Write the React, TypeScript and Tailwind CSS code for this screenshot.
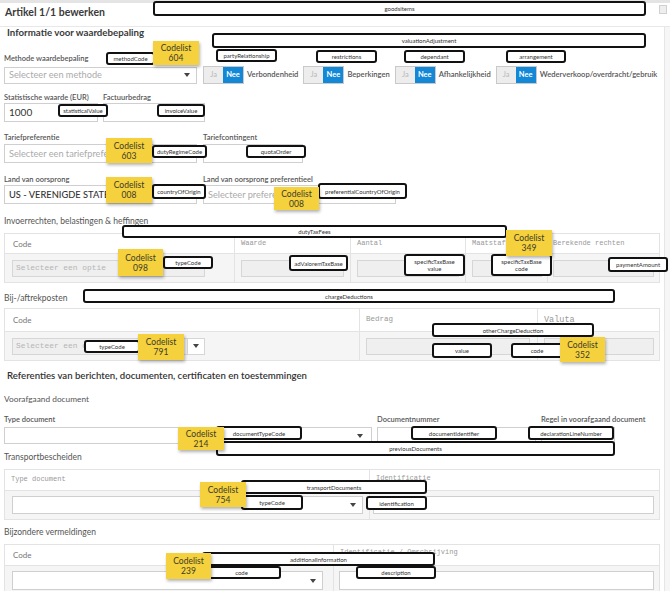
import React from "react";

const boxes: { c: string; t: string }[] = [
  { c: "left-[153px] top-[1px] w-[493px] h-[15px]", t: "goodsitems" },
  { c: "left-[212px] top-[33px] w-[434px] h-[15px]", t: "valuationAdjustment" },
  { c: "left-[106px] top-[52px] w-[49px] h-[13px]", t: "methodCode" },
  { c: "left-[216px] top-[49px] w-[61px] h-[13px]", t: "partyRelationship" },
  { c: "left-[316px] top-[50px] w-[61px] h-[13px]", t: "restrictions" },
  { c: "left-[404px] top-[50px] w-[61px] h-[13px]", t: "dependant" },
  { c: "left-[506px] top-[50px] w-[60px] h-[13px]", t: "arrangement" },
  { c: "left-[58px] top-[104px] w-[50px] h-[13px]", t: "statisticalValue" },
  { c: "left-[157px] top-[104px] w-[48px] h-[13px]", t: "invoiceValue" },
  { c: "left-[152px] top-[145px] w-[55px] h-[13px]", t: "dutyRegimeCode" },
  { c: "left-[246px] top-[145px] w-[60px] h-[13px]", t: "quotaOrder" },
  { c: "left-[152px] top-[184px] w-[54px] h-[15px]", t: "countryOfOrigin" },
  { c: "left-[318px] top-[183px] w-[89px] h-[16px]", t: "preferentialCountryOfOrigin" },
  { c: "left-[122px] top-[225px] w-[385px] h-[13px]", t: "dutyTaxFees" },
  { c: "left-[163px] top-[256px] w-[50px] h-[13px]", t: "typeCode" },
  { c: "left-[289px] top-[255px] w-[59px] h-[16px]", t: "adValoremTaxBase" },
  { c: "left-[404px] top-[254px] w-[61px] h-[22px]", t: "specificTaxBase\nvalue" },
  { c: "left-[491px] top-[254px] w-[61px] h-[22px]", t: "specificTaxBase\ncode" },
  { c: "left-[608px] top-[257px] w-[60px] h-[15px]", t: "paymentAmount" },
  { c: "left-[83px] top-[289px] w-[532px] h-[14px]", t: "chargeDeductions" },
  { c: "left-[84px] top-[340px] w-[56px] h-[13px]", t: "typeCode" },
  { c: "left-[432px] top-[323px] w-[162px] h-[14px]", t: "otherChargeDeduction" },
  { c: "left-[432px] top-[343px] w-[60px] h-[15px]", t: "value" },
  { c: "left-[511px] top-[343px] w-[52px] h-[15px]", t: "code" },
  { c: "left-[216px] top-[426px] w-[86px] h-[14px]", t: "documentTypeCode" },
  { c: "left-[411px] top-[426px] w-[86px] h-[14px]", t: "documentIdentifier" },
  { c: "left-[528px] top-[426px] w-[86px] h-[14px]", t: "declarationLineNumber" },
  { c: "left-[216px] top-[441px] w-[399px] h-[15px]", t: "previousDocuments" },
  { c: "left-[241px] top-[480px] w-[186px] h-[14px]", t: "transportDocuments" },
  { c: "left-[241px] top-[495px] w-[62px] h-[15px]", t: "typeCode" },
  { c: "left-[366px] top-[496px] w-[61px] h-[14px]", t: "identification" },
  { c: "left-[202px] top-[552px] w-[233px] h-[14px]", t: "additionalInformation" },
  { c: "left-[202px] top-[566px] w-[79px] h-[13px]", t: "code" },
  { c: "left-[356px] top-[566px] w-[80px] h-[13px]", t: "description" },
];

const notes: { c: string; n: string }[] = [
  { c: "left-[153px] top-[41px] w-[46px] h-[24px]", n: "604" },
  { c: "left-[106px] top-[138px] w-[46px] h-[25px]", n: "603" },
  { c: "left-[106px] top-[177px] w-[46px] h-[26px]", n: "008" },
  { c: "left-[274px] top-[187px] w-[45px] h-[23px]", n: "008" },
  { c: "left-[118px] top-[249px] w-[45px] h-[27px]", n: "098" },
  { c: "left-[506px] top-[230px] w-[46px] h-[26px]", n: "349" },
  { c: "left-[138px] top-[334px] w-[46px] h-[26px]", n: "791" },
  { c: "left-[560px] top-[337px] w-[45px] h-[25px]", n: "352" },
  { c: "left-[178px] top-[427px] w-[46px] h-[23px]", n: "214" },
  { c: "left-[200px] top-[482px] w-[46px] h-[25px]", n: "754" },
  { c: "left-[166px] top-[553px] w-[45px] h-[26px]", n: "239" },
];

function Arrow() {
  return (
    <svg width="6" height="4" viewBox="0 0 6 4" className="shrink-0">
      <path d="M0 0h6L3 4z" fill="#444" />
    </svg>
  );
}

function Toggle({ label }: { label: string }) {
  return (
    <div className="flex shrink-0 items-center">
      <div className="flex h-[18px] w-[41px] border border-[#c9c9c9]">
        <div className="flex w-[19px] items-center justify-center bg-[#ededed] text-[7.5px] text-[#b8b8b8]">Ja</div>
        <div className="flex flex-1 items-center justify-center bg-[#1288d6] text-[7.5px] font-bold text-white">Nee</div>
      </div>
      <span className="ml-[3px] whitespace-nowrap text-[7.6px] font-semibold text-[#555]">{label}</span>
    </div>
  );
}

const lbl = "h-[10px] text-[7.5px] font-semibold leading-[10px] text-[#555] whitespace-nowrap";
const mono = "font-['Liberation_Mono',monospace]";

export default function App() {
  return (
    <div className="relative h-[591px] w-[670px] overflow-hidden bg-white font-['Lato',sans-serif] text-[#444]">
      {/* right gutter */}
      <div className="absolute right-0 top-[27px] h-[564px] w-[6px] border-l border-[#e6e6e6] bg-[#f6f6f6]" />
      <div className="absolute left-[659px] top-[5px] h-[9px] w-[8px] border border-[#d0d0d0] bg-[#eeeeee]" />

      <div className="h-[3px] w-full bg-[#e4e4e4]" />
      <div className="h-[24px] border-b border-[#e8e8e8] pl-[5px] pt-[2px] text-[10.5px] font-bold leading-[14px] text-[#3a3a3a]">
        Artikel 1/1 bewerken
      </div>

      <div className="px-[4px]">
        <div className="h-[11px] pl-[3px] text-[9.7px] font-bold leading-[11px] text-[#3a3a3a]">
          Informatie voor waardebepaling
        </div>

        <div className={`mt-[16px] ${lbl}`}>Methode waardebepaling</div>
        <div className="mt-[2px] flex items-center">
          <div className="flex h-[17px] w-[193px] shrink-0 items-center justify-between border border-[#cfcfcf] pl-[4px] pr-[6px]">
            <span className="text-[9.2px] text-[#ababab]">Selecteer een methode</span>
            <Arrow />
          </div>
          <div className="ml-[6px] flex items-center gap-[5px]">
            <Toggle label="Verbondenheid" />
            <Toggle label="Beperkingen" />
            <Toggle label="Afhankelijkheid" />
            <Toggle label="Wederverkoop/overdracht/gebruik" />
          </div>
        </div>

        <div className="mt-[9px] flex">
          <div className="w-[94px] shrink-0">
            <div className={lbl}>Statistische waarde (EUR)</div>
            <div className="flex h-[19px] items-center border border-[#cfcfcf] pl-[4px] text-[10px] text-[#333]">1000</div>
          </div>
          <div className="ml-[5px] w-[102px] shrink-0">
            <div className={lbl}>Factuurbedrag</div>
            <div className="h-[19px] border border-[#cfcfcf]" />
          </div>
        </div>

        <div className="mt-[11px] flex">
          <div className="w-[193px] shrink-0">
            <div className={lbl}>Tariefpreferentie</div>
            <div className="mt-[1px] flex h-[19px] items-center overflow-hidden border border-[#cfcfcf] pl-[4px]">
              <span className="whitespace-nowrap text-[9.2px] text-[#ababab]">Selecteer een tariefpreferentie</span>
            </div>
          </div>
          <div className="ml-[6px] w-[100px] shrink-0">
            <div className={lbl}>Tariefcontingent</div>
            <div className="mt-[1px] h-[19px] border border-[#cfcfcf]" />
          </div>
        </div>

        <div className="mt-[12px] flex">
          <div className="w-[193px] shrink-0">
            <div className={lbl}>Land van oorsprong</div>
            <div className="flex h-[19px] items-center overflow-hidden border border-[#cfcfcf] pl-[4px]">
              <span className="whitespace-nowrap text-[9.3px] font-medium text-[#333]">US - VERENIGDE STATEN</span>
            </div>
          </div>
          <div className="ml-[6px] w-[193px] shrink-0">
            <div className={lbl}>Land van oorsprong preferentieel</div>
            <div className="flex h-[19px] items-center overflow-hidden border border-[#cfcfcf] pl-[4px]">
              <span className="whitespace-nowrap text-[9.2px] text-[#ababab]">Selecteer preferentieel land</span>
            </div>
          </div>
        </div>

        <div className="mt-[12px] h-[10px] text-[8.5px] leading-[10px] text-[#555]">Invoerrechten, belastingen &amp; heffingen</div>
        <div className="mt-[7px] w-[656px] border border-[#e3e3e3]">
          <div className="grid h-[19px] grid-cols-[229px_116px_115px_82px_1fr] text-[7px] text-[#999]">
            <div className="flex items-center pl-[8px] text-[8px] text-[#777]">Code</div>
            <div className={`flex items-center border-l border-[#e3e3e3] pl-[6px] ${mono}`}>Waarde</div>
            <div className={`flex items-center border-l border-[#e3e3e3] pl-[6px] ${mono}`}>Aantal</div>
            <div className={`flex items-center border-l border-[#e3e3e3] pl-[6px] ${mono}`}>Maatstaf</div>
            <div className={`flex items-center border-l border-[#e3e3e3] pl-[5px] ${mono}`}>Berekende rechten</div>
          </div>
          <div className="grid h-[29px] grid-cols-[229px_116px_115px_82px_1fr] border-t border-[#e3e3e3] bg-[#f5f5f5]">
            <div className="flex items-center pl-[7px]">
              <div className={`flex h-[17px] w-[193px] items-center border border-[#d6d6d6] bg-[#efefef] pl-[3px] text-[7.9px] text-[#b5b5b5] ${mono}`}>Selecteer een optie</div>
            </div>
            <div className="flex items-center border-l border-[#e3e3e3] pl-[6px]">
              <div className="h-[17px] w-[103px] border border-[#d6d6d6] bg-[#efefef]" />
            </div>
            <div className="flex items-center border-l border-[#e3e3e3] pl-[6px]">
              <div className="h-[17px] w-[102px] border border-[#d6d6d6] bg-[#efefef]" />
            </div>
            <div className="flex items-center border-l border-[#e3e3e3] pl-[6px]">
              <div className="h-[17px] w-[70px] border border-[#d6d6d6] bg-[#efefef]" />
            </div>
            <div className="flex items-center border-l border-[#e3e3e3] pl-[5px]">
              <div className="h-[17px] w-[101px] border border-[#d6d6d6] bg-[#efefef]" />
            </div>
          </div>
        </div>

        <div className="mt-[10px] h-[10px] text-[8.5px] leading-[10px] text-[#555]">Bij-/aftrekposten</div>
        <div className="mt-[5px] w-[656px] border border-[#e3e3e3]">
          <div className="grid h-[22px] grid-cols-[354px_178px_1fr] text-[7.5px] text-[#999]">
            <div className="flex items-center pl-[8px] text-[8px] text-[#777]">Code</div>
            <div className={`flex items-center border-l border-[#e3e3e3] pl-[6px] ${mono}`}>Bedrag</div>
            <div className={`flex items-center border-l border-[#e3e3e3] pl-[6px] text-[8.5px] ${mono}`}>Valuta</div>
          </div>
          <div className="grid h-[29px] grid-cols-[354px_178px_1fr] border-t border-[#e3e3e3] bg-[#f5f5f5]">
            <div className="flex items-center pl-[7px]">
              <div className="flex h-[17px] w-[193px] items-center border border-[#d6d6d6] bg-[#efefef]">
                <span className={`flex-1 pl-[3px] text-[7.9px] text-[#b5b5b5] ${mono}`}>Selecteer een optie</span>
                <div className="flex h-full w-[17px] items-center justify-center border-l border-[#d6d6d6] bg-white">
                  <Arrow />
                </div>
              </div>
            </div>
            <div className="flex items-center border-l border-[#e3e3e3] pl-[6px]">
              <div className="h-[17px] w-[164px] border border-[#d6d6d6] bg-[#efefef]" />
            </div>
            <div className="flex items-center border-l border-[#e3e3e3] pl-[6px]">
              <div className="h-[17px] w-[110px] border border-[#d6d6d6] bg-[#efefef]" />
            </div>
          </div>
        </div>

        <div className="mt-[9px] h-[11px] pl-[3px] text-[9.6px] font-semibold leading-[11px] text-[#333]">
          Referenties van berichten, documenten, certificaten en toestemmingen
        </div>
        <div className="mt-[13px] h-[10px] text-[8.3px] leading-[10px] text-[#555]">Voorafgaand document</div>

        <div className="mt-[11px] flex">
          <div className="w-[368px] shrink-0">
            <div className={lbl}>Type document</div>
            <div className="mt-[2px] flex h-[17px] items-center justify-end border border-[#cfcfcf] pr-[8px]">
              <Arrow />
            </div>
          </div>
          <div className="ml-[5px] w-[159px] shrink-0">
            <div className={lbl}>Documentnummer</div>
            <div className="mt-[2px] h-[17px] border border-[#cfcfcf]" />
          </div>
          <div className="ml-[5px] w-[110px] shrink-0">
            <div className={lbl}>Regel in voorafgaand document</div>
            <div className="mt-[2px] h-[17px] w-[74px] border border-[#cfcfcf]" />
          </div>
        </div>

        <div className="mt-[8px] h-[10px] text-[8.5px] leading-[10px] text-[#555]">Transportbescheiden</div>
        <div className="mt-[7px] w-[656px] border border-[#e3e3e3]">
          <div className={`grid h-[20px] grid-cols-[364px_1fr] text-[7px] text-[#999] ${mono}`}>
            <div className="flex items-center pb-[2px] pl-[6px]">Type document</div>
            <div className="flex items-center border-l border-[#e3e3e3] pb-[3px] pl-[6px]">Identificatie</div>
          </div>
          <div className="grid h-[29px] grid-cols-[364px_1fr] border-t border-[#e3e3e3] bg-[#f5f5f5]">
            <div className="flex items-center pl-[7px]">
              <div className="flex h-[18px] w-[351px] items-center justify-end border border-[#cfcfcf] bg-white pr-[6px]">
                <Arrow />
              </div>
            </div>
            <div className="flex items-center border-l border-[#e3e3e3] pl-[3px]">
              <div className="h-[18px] w-[281px] border border-[#cfcfcf] bg-white" />
            </div>
          </div>
        </div>

        <div className="mt-[7px] h-[10px] text-[8.5px] leading-[10px] text-[#555]">Bijzondere vermeldingen</div>
        <div className="mt-[7px] w-[656px] border border-[#e3e3e3]">
          <div className="grid h-[20px] grid-cols-[328px_1fr] text-[7px] text-[#999]">
            <div className="flex items-center pl-[8px] text-[8px] text-[#777]">Code</div>
            <div className={`flex items-center border-l border-[#e3e3e3] pb-[5px] pl-[6px] ${mono}`}>Identificatie / Omschrijving</div>
          </div>
          <div className="grid h-[30px] grid-cols-[328px_1fr] border-t border-[#e3e3e3] bg-[#f5f5f5]">
            <div className="flex items-center pl-[7px]">
              <div className="flex h-[19px] w-[311px] items-center justify-end border border-[#cfcfcf] bg-white pr-[6px]">
                <Arrow />
              </div>
            </div>
            <div className="flex items-center border-l border-[#e3e3e3] pl-[5px]">
              <div className="h-[19px] w-[315px] border border-[#cfcfcf] bg-white" />
            </div>
          </div>
        </div>
      </div>

      {/* annotation boxes */}
      {boxes.map((b, i) => (
        <div
          key={i}
          className={`absolute ${b.c} flex items-center justify-center whitespace-pre-line rounded-[3px] border-2 border-[#111] bg-white text-center text-[6px] leading-[7px] text-[#333]`}
        >
          {b.t}
        </div>
      ))}
      {/* codelist notes */}
      {notes.map((n, i) => (
        <div
          key={i}
          className={`absolute ${n.c} flex flex-col items-center justify-center bg-[#f4d13d] text-[8.5px] leading-[10px] text-[#3d3a2a] shadow-[1px_2px_3px_rgba(0,0,0,0.3)]`}
        >
          <span>Codelist</span>
          <span>{n.n}</span>
        </div>
      ))}
    </div>
  );
}
